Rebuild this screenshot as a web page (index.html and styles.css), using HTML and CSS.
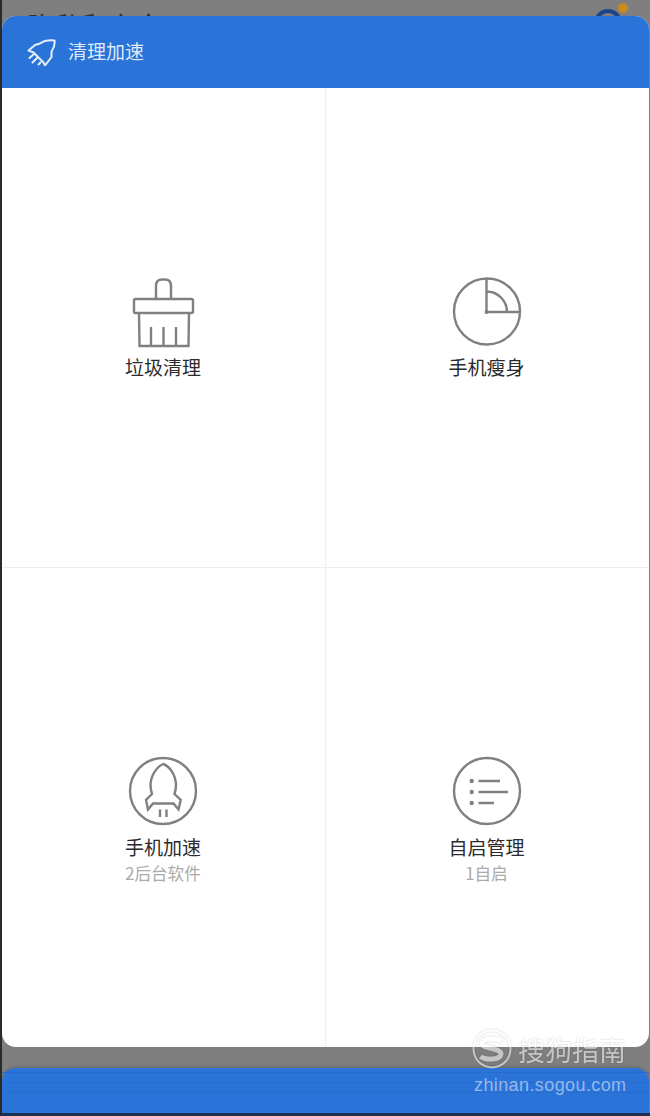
FILE: index.html
```html
<!DOCTYPE html>
<html lang="zh-CN">
<head>
    <meta charset="UTF-8">
    <meta name="viewport" content="width=device-width, initial-scale=1.0">
    <title>清理加速</title>
    <link rel="stylesheet" href="styles.css">
</head>
<body>

<div class="screen">
    <div class="back-bar">
        <span class="back-title">隐私和安全</span>
        <span class="back-avatar"></span>
        <span class="back-dot"></span>
    </div>

    <div class="panel">
        <div class="panel-head">
            <svg class="head-icon" viewBox="0 0 29 27" fill="none" stroke="#e6eefa" stroke-width="2" stroke-linejoin="round" stroke-linecap="round">
                <path d="M27.500 1.500C22 1 17 1.500 13 4.500L8 6L1.500 11.500L6.500 13.500L16.500 23.500L18 26.500L24.500 18L24.500 12.500C27 9 28 5 27.500 1.500Z"/>
                <path d="M2.500 19L6.500 15.500M5.500 23.500L10 19M11.500 25.500L13.500 23.500"/>
            </svg>
            <span class="head-title">清理加速</span>
        </div>

        <div class="tools">
            <div class="tool">
                <svg class="tool-icon" viewBox="0 0 68 68" fill="none">
                    <path d="M27 22V9Q27 2.500 33 2.500H36Q42 2.500 42 9V22"/>
                    <rect x="5" y="22" width="59" height="14" rx="1.500"/>
                    <path d="M10 36L10.500 69H59.500L60 36M22 50V69M34.500 50V69M47 50V69"/>
                </svg>
                <span class="tool-name">垃圾清理</span>
            </div>
            <div class="tool">
                <svg class="tool-icon" viewBox="0 0 68 68" fill="none">
                    <circle cx="34" cy="34.500" r="33"/>
                    <path d="M33.500 1.500V35H67M33.500 14.500A20.500 20.500 0 0 1 54 35"/>
                    <circle class="dot" cx="33.500" cy="35" r="2"/>
                </svg>
                <span class="tool-name">手机瘦身</span>
            </div>
            <div class="tool">
                <svg class="tool-icon" viewBox="0 0 68 68" fill="none">
                    <circle cx="34" cy="34" r="33"/>
                    <path d="M34.300 7C29 9 22 17 21.500 27.500C21.500 31 22 34 23 37L17 43L19 52.500L24 46.500H44.500L49.500 52.500L51.700 43L45.500 37C46.500 34 47 31 47 27.500C46.500 17 40 9 34.300 7Z"/>
                    <path d="M31 52.500V60M37.500 52.500V60"/>
                </svg>
                <span class="tool-name">手机加速</span>
                <span class="tool-sub">2后台软件</span>
            </div>
            <div class="tool">
                <svg class="tool-icon" viewBox="0 0 68 68" fill="none">
                    <circle cx="34" cy="34" r="33"/>
                    <path d="M25.500 24H47M25.500 35H55M25.500 46H41"/>
                    <circle class="dot" cx="18.700" cy="24" r="2.200"/>
                    <circle class="dot" cx="18.700" cy="35" r="2.200"/>
                    <circle class="dot" cx="18.700" cy="46" r="2.200"/>
                </svg>
                <span class="tool-name">自启管理</span>
                <span class="tool-sub">1自启</span>
            </div>
        </div>
    </div>

    <div class="stack">
        <div class="stack-layer"></div>
        <div class="stack-layer"></div>
        <div class="stack-layer"></div>
    </div>

    <!-- watermark -->
    <div class="mark">
        <div class="mark-row">
            <svg class="mark-logo" viewBox="0 0 44 44" fill="none">
                <circle cx="22" cy="22" r="18.500" stroke="#fff" stroke-width="2"/>
                <path d="M32 14C27 11 13 10.500 12 16.500C11.500 22 31 20.500 31 27C30.500 33.500 15 33 10.500 29.500" stroke="#fff" stroke-width="5"/>
            </svg>
            <span class="mark-name">搜狗指南</span>
        </div>
        <div class="mark-url">zhinan.sogou.com</div>
    </div>
</div>

</body>
</html>
```

FILE: styles.css
```css
html, body {
    margin: 0;
    padding: 0;
    background: #7f7f7f;
    font-family: "Noto Sans CJK SC", "Noto Sans", sans-serif;
}

.screen {
    position: relative;
    width: 650px;
    height: 1116px;
    overflow: hidden;
    background: #7f7f7f;
    box-sizing: border-box;
    border-left: 2px solid #2b2b2b;
    border-bottom: 3px solid #1b2f4f;
}

/* Страница под панелью */
.back-bar {
    position: relative;
    height: 16px;
    overflow: hidden;
}

.back-title {
    position: absolute;
    left: 25px;
    top: 16px;
    font-size: 27px;
    line-height: 20px;
    white-space: nowrap;
    color: #333;
}

.back-avatar {
    position: absolute;
    left: 592px;
    top: 9px;
    width: 28px;
    height: 28px;
    box-sizing: border-box;
    border: 4px solid #1d4488;
    border-radius: 50%;
}

.back-dot {
    position: absolute;
    left: 616px;
    top: 3px;
    width: 10px;
    height: 10px;
    border-radius: 50%;
    background: #c98a1e;
}

/* Панель */
.panel {
    width: 647px;
    height: 1031px;
    background: #fff;
    border-radius: 14px;
    overflow: hidden;
    display: flex;
    flex-direction: column;
}

.panel-head {
    height: 72px;
    flex: none;
    background: #2a73d8;
    display: flex;
    align-items: center;
    gap: 12px;
    padding-left: 25px;
    color: #dfe9f8;
    font-size: 19px;
}

.head-icon {
    width: 29px;
    height: 27px;
}

.head-title {
    line-height: 28px;
    margin-bottom: 3px;
}

.tools {
    flex: 1;
    display: grid;
    grid-template-columns: 324px 323px;
    grid-template-rows: 480px 479px;
}

.tool {
    display: flex;
    flex-direction: column;
    align-items: center;
    padding: 189px 1px 0 0;
    box-sizing: border-box;
}

.tool:nth-child(odd) {
    border-right: 1px solid #eee;
    padding-right: 1px;
}

.tool:nth-child(even) {
    padding-right: 2px;
}

.tool:nth-child(-n+2) {
    border-bottom: 1px solid #eee;
}

.tool-icon {
    width: 68px;
    height: 68px;
    overflow: visible;
    stroke: #808080;
    stroke-width: 2.400;
}

.tool-icon .dot {
    fill: #808080;
    stroke: none;
}

.tool-name {
    margin-top: 8px;
    font-size: 19px;
    line-height: 28px;
    color: #2b2b2b;
}

.tool-sub {
    font-size: 16.600px;
    line-height: 24px;
    color: #aaa;
}

/* Карточки снизу */
.stack {
    margin: 21px 1px 0 0;
    height: 45px;
    background: #2a73d8;
    border-radius: 14px 14px 0 0;
    box-shadow: 0 -2px 3px rgba(0, 0, 0, 0.12);
    display: flex;
    flex-direction: column;
    gap: 9px;
    padding-top: 4px;
    box-sizing: border-box;
}

.stack-layer {
    height: 1px;
    background: #286dcd;
}

/* Водяной знак */
.mark {
    position: absolute;
    left: 468px;
    top: 1025px;
    width: 182px;
    color: rgba(255, 255, 255, 0.5);
}

.mark-row {
    display: flex;
    align-items: center;
    gap: 4px;
    opacity: 0.55;
    filter: drop-shadow(0 0 1px rgba(0, 0, 0, 0.35));
}

.mark-logo {
    width: 44px;
    height: 44px;
}

.mark-name {
    font-size: 27px;
    line-height: 44px;
    margin-top: 3px;
    color: #fff;
}

.mark-url {
    font-family: "Liberation Sans", Arial, sans-serif;
    font-size: 18px;
    line-height: 20px;
    letter-spacing: 0.400px;
    padding-left: 4px;
    margin-top: 3px;
}
```
